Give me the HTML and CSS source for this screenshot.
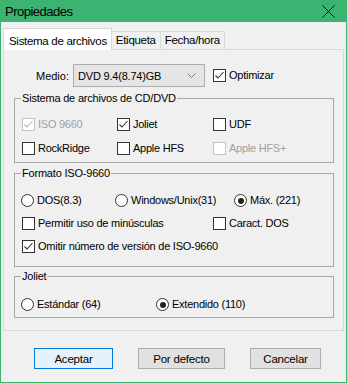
FILE: index.html
```html
<!DOCTYPE html>
<html lang="es">
<head>
    <meta charset="UTF-8">
    <title>Propiedades</title>
    <link rel="stylesheet" href="styles.css">
</head>
<body>
    <div class="window">
        <div class="titlebar">
            <span class="title">Propiedades</span>
            <svg class="close" width="13" height="13" viewBox="0 0 13 13">
                <path d="M0.5 0.5 L12.5 12.5 M12.5 0.5 L0.5 12.5" stroke="#111" stroke-width="1" fill="none"/>
            </svg>
        </div>

        <div class="tabs">
            <div class="tab active">Sistema de archivos</div>
            <div class="tab">Etiqueta</div>
            <div class="tab">Fecha/hora</div>
        </div>

        <div class="panel">
            <div class="media-row">
                <span class="media-label">Medio:</span>
                <div class="combo">
                    <span>DVD 9.4(8.74)GB</span>
                    <svg width="9" height="5" viewBox="0 0 9 5">
                        <path d="M0.5 0.5 L4.5 4.5 L8.5 0.5" stroke="#777" fill="none"/>
                    </svg>
                </div>
                <label class="check"><span class="box checked"></span>Optimizar</label>
            </div>

            <fieldset class="group fs-group">
                <legend>Sistema de archivos de CD/DVD</legend>
                <div class="row">
                    <label class="check col-a disabled"><span class="box checked"></span>ISO 9660</label>
                    <label class="check col-b"><span class="box checked"></span>Joliet</label>
                    <label class="check"><span class="box"></span>UDF</label>
                </div>
                <div class="row">
                    <label class="check col-a"><span class="box"></span>RockRidge</label>
                    <label class="check col-b"><span class="box"></span>Apple HFS</label>
                    <label class="check disabled"><span class="box"></span>Apple HFS+</label>
                </div>
            </fieldset>

            <fieldset class="group iso-group">
                <legend>Formato ISO-9660</legend>
                <div class="row">
                    <label class="radio col-a"><span class="dot"></span>DOS(8.3)</label>
                    <label class="radio col-w"><span class="dot"></span>Windows/Unix(31)</label>
                    <label class="radio"><span class="dot on"></span>Máx. (221)</label>
                </div>
                <div class="row">
                    <label class="check col-wide"><span class="box"></span>Permitir uso de minúsculas</label>
                    <label class="check"><span class="box"></span>Caract. DOS</label>
                </div>
                <div class="row">
                    <label class="check"><span class="box checked"></span>Omitir número de versión de ISO-9660</label>
                </div>
            </fieldset>

            <fieldset class="group joliet-group">
                <legend>Joliet</legend>
                <div class="row">
                    <label class="radio col-j"><span class="dot"></span>Estándar (64)</label>
                    <label class="radio"><span class="dot on"></span>Extendido (110)</label>
                </div>
            </fieldset>
        </div>

        <div class="buttons">
            <button class="btn default btn-ok">Aceptar</button>
            <button class="btn btn-def">Por defecto</button>
            <button class="btn btn-cancel">Cancelar</button>
        </div>
    </div>
</body>
</html>
```

FILE: styles.css
```css
body {
    margin: 0;
    font-family: "Liberation Sans", Arial, sans-serif;
    font-size: 11px;
    color: #000;
    background: #f0f0f0;
}

.window {
    width: 347px;
    height: 383px;
    box-sizing: border-box;
    border: 1px solid #3cb371;
    border-top: none;
    background: #f0f0f0;
}

.titlebar {
    height: 22px;
    margin: 0 -1px;
    background: #3cb371;
    display: flex;
    align-items: center;
    justify-content: space-between;
    padding: 0 12px 0 5px;
}

.title {
    font-size: 13px;
    letter-spacing: -0.5px;
    color: #000;
}

.close {
    display: block;
}

/* tabs */
.tabs {
    display: flex;
    align-items: flex-end;
    margin-top: 6px;
    padding-left: 2px;
    height: 21px;
}

.tab {
    height: 17px;
    line-height: 17px;
    padding: 0 4px;
    border: 1px solid #d9d9d9;
    border-bottom: none;
    border-left: none;
    background: #f0f0f0;
    letter-spacing: -0.3px;
    font-size: 11.5px;
}

.tab.active {
    position: relative;
    height: 21px;
    line-height: 24px;
    margin-bottom: -1px;
    padding: 0 4px 0 5px;
    border-left: 1px solid #d9d9d9;
    background: #fff;
}

.panel {
    width: 341px;
    height: 282px;
    box-sizing: border-box;
    margin-left: 2px;
    border: 1px solid #d9d9d9;
    padding: 14px 0 0 10px;
}

/* medio row */
.media-row {
    display: flex;
    align-items: center;
    height: 23px;
}

.media-label {
    width: 59px;
    text-align: right;
    padding-right: 4px;
    box-sizing: border-box;
}

.combo {
    width: 132px;
    height: 23px;
    box-sizing: border-box;
    border: 1px solid #adadad;
    background: #e5e5e5;
    display: flex;
    align-items: center;
    justify-content: space-between;
    padding: 0 8px 0 4px;
    margin-right: 8px;
    letter-spacing: -0.2px;
}

/* group boxes */
.group {
    width: 320px;
    box-sizing: border-box;
    margin: 0;
    border: 1px solid #a9a9a9;
    padding: 13px 7px 7px;
}

.group legend {
    padding: 0 1px;
    margin-left: -1px;
    line-height: 13px;
    letter-spacing: -0.2px;
}

.fs-group {
    margin-top: 5px;
}

.iso-group {
    margin-top: 4px;
    padding-top: 14px;
    padding-bottom: 13px;
}

.joliet-group {
    margin-top: 3px;
    padding-top: 15px;
    padding-bottom: 6px;
}

.row {
    display: flex;
    align-items: center;
    height: 13px;
}

.row + .row {
    margin-top: 11px;
}

.iso-group .row + .row {
    margin-top: 10px;
}

.col-a {
    width: 95px;
}

.col-b {
    width: 96px;
}

.col-w {
    width: 120px;
}

.col-wide {
    width: 191px;
}

.col-j {
    width: 136px;
}

/* check boxes and radios */
.check,
.radio {
    display: flex;
    align-items: center;
    line-height: 13px;
    letter-spacing: -0.25px;
    white-space: nowrap;
}

.box {
    width: 13px;
    height: 13px;
    box-sizing: border-box;
    border: 1px solid #333;
    background: #fff;
    margin-right: 3px;
    flex: none;
}

.box.checked {
    background: #fff url("data:image/svg+xml,%3Csvg xmlns='http://www.w3.org/2000/svg' width='11' height='11'%3E%3Cpath d='M1.5 5.5 L4 8 L9.5 2' stroke='%23333' fill='none' stroke-width='1.1'/%3E%3C/svg%3E") center no-repeat;
}

.disabled {
    color: #a0a0a0;
}

.disabled .box {
    border-color: #c4c4c4;
}

.disabled .box.checked {
    background: #fff url("data:image/svg+xml,%3Csvg xmlns='http://www.w3.org/2000/svg' width='11' height='11'%3E%3Cpath d='M1.5 5.5 L4 8 L9.5 2' stroke='%23b4b4b4' fill='none' stroke-width='1.1'/%3E%3C/svg%3E") center no-repeat;
}

.radio {
    margin-left: -1px;
}

.dot {
    width: 13px;
    height: 13px;
    box-sizing: border-box;
    border: 1px solid #333;
    border-radius: 50%;
    background: #fff;
    margin-right: 3px;
    flex: none;
    display: flex;
    align-items: center;
    justify-content: center;
}

.dot.on::after {
    content: "";
    width: 6px;
    height: 6px;
    border-radius: 50%;
    background: #222;
}

/* bottom buttons */
.buttons {
    display: flex;
    margin-top: 17px;
    padding-left: 33px;
}

.btn {
    height: 21px;
    box-sizing: border-box;
    border: 1px solid #adadad;
    background: #e1e1e1;
    font-family: "Liberation Sans", Arial, sans-serif;
    font-size: 11.5px;
    letter-spacing: -0.2px;
    padding: 0;
    margin: 0;
}

.btn.default {
    border-color: #0078d7;
    background: #e5f1fb;
}

.btn-ok {
    width: 79px;
}

.btn-def {
    width: 87px;
    margin-left: 25px;
}

.btn-cancel {
    width: 71px;
    margin-left: 25px;
}
```
